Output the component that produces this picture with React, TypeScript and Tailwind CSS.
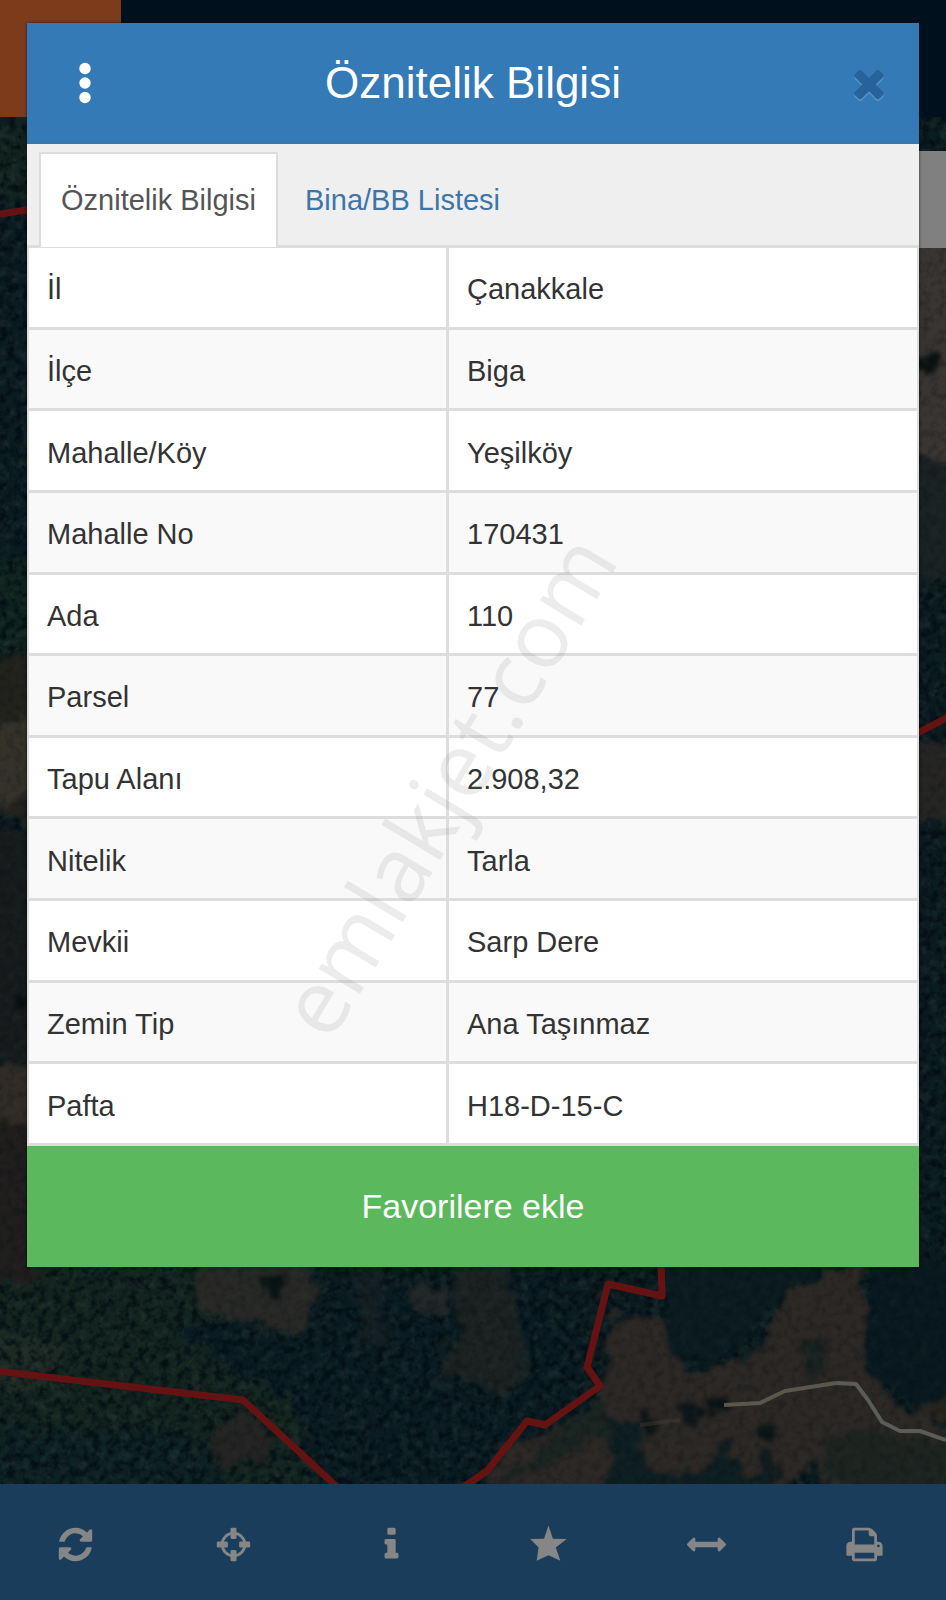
import type { ReactNode } from 'react';

const rows = [
  { label: 'İl', value: 'Çanakkale' },
  { label: 'İlçe', value: 'Biga' },
  { label: 'Mahalle/Köy', value: 'Yeşilköy' },
  { label: 'Mahalle No', value: '170431' },
  { label: 'Ada', value: '110' },
  { label: 'Parsel', value: '77' },
  { label: 'Tapu Alanı', value: '2.908,32' },
  { label: 'Nitelik', value: 'Tarla' },
  { label: 'Mevkii', value: 'Sarp Dere' },
  { label: 'Zemin Tip', value: 'Ana Taşınmaz' },
  { label: 'Pafta', value: 'H18-D-15-C' },
];

const Icon = ({ children, className = 'size-[39px]' }: { children: ReactNode; className?: string }) => (
  <svg viewBox="0 0 1792 1792" fill="currentColor" className={className} aria-hidden="true">
    {children}
  </svg>
);

const tools = [
  {
    name: 'Yenile',
    icon: (
      <path d="M1639 1056q0 5-1 7-64 268-268 434.5t-478 166.5q-146 0-282.5-55t-243.5-157l-129 129q-19 19-45 19t-45-19-19-45v-448q0-26 19-45t45-19h448q26 0 45 19t19 45-19 45l-137 137q71 66 161 102t187 36q134 0 250-65t186-179q11-17 53-117 8-23 30-23h192q13 0 22.5 9.5t9.5 22.5zm25-800v448q0 26-19 45t-45 19h-448q-26 0-45-19t-19-45 19-45l138-138q-148-137-349-137-134 0-250 65t-186 179q-11 17-53 117-8 23-30 23h-199q-13 0-22.5-9.5t-9.5-22.5v-7q65-268 270-434.5t480-166.5q146 0 284 55.5t245 156.5l130-129q19-19 45-19t45 19 19 45z" />
    ),
  },
  {
    name: 'Konum',
    icon: (
      <>
        <circle cx="896" cy="896" r="520" fill="none" stroke="currentColor" strokeWidth="130" />
        <rect x="758" y="128" width="276" height="510" rx="60" />
        <rect x="758" y="1154" width="276" height="510" rx="60" />
        <rect x="128" y="758" width="510" height="276" rx="60" />
        <rect x="1154" y="758" width="510" height="276" rx="60" />
      </>
    ),
  },
  {
    name: 'Bilgi',
    icon: (
      <path d="M1216 1344v128q0 26-19 45t-45 19h-512q-26 0-45-19t-19-45v-128q0-26 19-45t45-19h64v-384h-64q-26 0-45-19t-19-45v-128q0-26 19-45t45-19h384q26 0 45 19t19 45v576h64q26 0 45 19t19 45zm-128-1152v192q0 26-19 45t-45 19h-256q-26 0-45-19t-19-45v-192q0-26 19-45t45-19h256q26 0 45 19t19 45z" />
    ),
  },
  {
    name: 'Favoriler',
    icon: (
      <path d="M896 25 L1100 630 L1735 645 L1230 1030 L1440 1640 L896 1395 L352 1640 L440 1030 L55 645 L692 630Z" />
    ),
  },
  {
    name: 'Ölçüm',
    icon: (
      <path d="M1792 896q0 26-19 45l-256 256q-19 19-45 19t-45-19-19-45v-128h-1024v128q0 26-19 45t-45 19-45-19l-256-256q-19-19-19-45t19-45l256-256q19-19 45-19t45 19 19 45v128h1024v-128q0-26 19-45t45-19 45 19l256 256q19 19 19 45z" />
    ),
  },
  {
    name: 'Yazdır',
    icon: (
      <path d="M448 1536h896v-256h-896v256zm0-640h896v-384h-160q-40 0-68-28t-28-68v-160h-640v640zm1152 64q0-26-19-45t-45-19-45 19-19 45 19 45 45 19 45-19 19-45zm128 0v416q0 13-9.5 22.5t-22.5 9.5h-224v160q0 40-28 68t-68 28h-960q-40 0-68-28t-28-68v-160h-224q-13 0-22.5-9.5t-9.5-22.5v-416q0-79 56.5-135.5t135.5-56.5h64v-544q0-40 28-68t68-28h672q40 0 88 20t76 48l152 152q28 28 48 76t20 88v256h64q79 0 135.5 56.5t56.5 135.5z" />
    ),
  },
];

// Satellite map behind the dialog, already darkened by the backdrop
const MapBackground = () => (
  <svg
    viewBox="0 0 946 1600"
    preserveAspectRatio="xMidYMid slice"
    className="absolute inset-0 h-full w-full"
    aria-hidden="true"
  >
    <defs>
      <filter id="rough" x="-10%" y="-10%" width="120%" height="120%" colorInterpolationFilters="sRGB">
        <feTurbulence type="fractalNoise" baseFrequency="0.06" numOctaves="3" seed="4" result="n" />
        <feDisplacementMap in="SourceGraphic" in2="n" scale="26" xChannelSelector="R" yChannelSelector="G" />
        <feGaussianBlur stdDeviation="2" />
      </filter>
      <filter id="shade" x="0" y="0" width="100%" height="100%" colorInterpolationFilters="sRGB">
        <feTurbulence type="fractalNoise" baseFrequency="0.13" numOctaves="4" seed="9" />
        <feColorMatrix values="0 0 0 0 0  0 0 0 0 0.03  0 0 0 0 0.06  3 0 0 0 -1.3" />
      </filter>
      <filter id="light" x="0" y="0" width="100%" height="100%" colorInterpolationFilters="sRGB">
        <feTurbulence type="fractalNoise" baseFrequency="0.1" numOctaves="4" seed="21" />
        <feColorMatrix values="0 0 0 0 0.2  0 0 0 0 0.26  0 0 0 0 0.24  0 2.4 0 0 -1.1" />
      </filter>
    </defs>

    <rect width="946" height="1600" fill="#0b1c20" />

    {/* woodland */}
    <g filter="url(#rough)">
      <path d="M-20 117H60V200H-20Z" fill="#12231f" />
      <path d="M-20 560H60V660H-20Z" fill="#0f231e" />
      <path d="M-20 1260H190L260 1330L330 1340L300 1420L330 1500H-20Z" fill="#13241f" />
      <path d="M170 1330L340 1300L560 1270L600 1400L480 1500H330L290 1400Z" fill="#0a1c22" />
      <path d="M0 1430H190L240 1500H0Z" fill="#0d2022" />
      <path d="M-20 1330L60 1345L55 1390L-20 1395Z" fill="#1d2a24" />
    </g>

    <rect y="117" width="946" height="1367" filter="url(#shade)" opacity="0.6" />
    <rect y="117" width="946" height="1367" filter="url(#light)" opacity="0.3" />

    {/* fields and bare ground */}
    <g filter="url(#rough)">
      <path d="M-40 670L50 650V830L-40 800Z" fill="#22221d" />
      <path d="M-40 750L50 700V780L-40 830Z" fill="#35322a" />
      <path d="M-40 830H50V1060H-40Z" fill="#181b1c" />
      <path d="M-40 1065H50V1125H-40Z" fill="#312c27" />
      <path d="M-40 1125H50V1280H-40Z" fill="#201e1d" />
      <path d="M895 240H980V470L895 450Z" fill="#393532" />
      <path d="M895 460H980V580H895Z" fill="#1b2223" />
      <path d="M895 740H980V825L895 815Z" fill="#262523" />
      <path d="M200 1258H315L316 1310L298 1335L260 1325L192 1306Z" fill="#282926" />
      <path d="M210 1435L245 1410L272 1440L264 1462L214 1468Z" fill="#242423" />
      <path d="M350 1265L365 1345L385 1340L380 1262Z" fill="#172122" opacity="0.7" />
      <path d="M410 1285L450 1290L445 1315L415 1305Z" fill="#232828" />
      <path d="M455 1262H510L530 1380L500 1395L440 1370L455 1340Z" fill="#1f2422" opacity="0.8" />
      <path d="M608 1315L665 1320L690 1375L760 1350L790 1290L850 1265H865L868 1370L890 1400L980 1440V1500H830L815 1460L770 1500H480L500 1450L600 1410Z" fill="#2c2825" />
      <path d="M905 1380L980 1370V1415L920 1415Z" fill="#29251f" />
    </g>

    {/* shades inside the fields */}
    <g filter="url(#rough)">
      <path d="M490 1490L560 1435L600 1395L612 1430L540 1470Z" fill="#1a2421" />
      <path d="M610 1420L634 1420L645 1470L700 1480L722 1440L745 1470L775 1490H610Z" fill="#0e1e21" />
      <path d="M660 1262H840L790 1290L745 1340L700 1366L675 1360Z" fill="#0c1b20" />
      <path d="M805 1345L830 1338L825 1380L805 1378Z" fill="#1a2221" />
      <path d="M825 1440L860 1430L980 1450V1490H860L830 1480Z" fill="#1d2420" />
      <path d="M765 1445L780 1470L770 1490L760 1480Z" fill="#121c1e" />
      <path d="M870 1262H980V1370L920 1410L868 1370Z" fill="#09191f" />
      <circle cx="694" cy="1416" r="11" fill="#0e1618" />
      <circle cx="718" cy="1406" r="10" fill="#0c1214" />
      <circle cx="648" cy="1426" r="9" fill="#0e1517" />
      <circle cx="768" cy="1430" r="8" fill="#0e1517" />
      <circle cx="275" cy="1287" r="10" fill="#0a1314" />
      <ellipse cx="928" cy="363" rx="13" ry="9" fill="#0c1211" />
      <ellipse cx="22" cy="1001" rx="9" ry="5" fill="#0a1011" />
    </g>

    <rect y="117" width="946" height="1367" filter="url(#shade)" opacity="0.2" />
    <rect y="117" width="946" height="1367" filter="url(#light)" opacity="0.12" />

    {/* dirt road */}
    <path d="M640 1425L680 1420" stroke="#49423a" strokeWidth="4" fill="none" opacity="0.4" />
    <path d="M724 1405L760 1403L785 1391L836 1383" stroke="#5c574b" strokeWidth="4" fill="none" strokeLinejoin="round" />
    <path d="M836 1383L856 1384L868 1400L882 1422L900 1431L920 1431L946 1440" stroke="#5a5c58" strokeWidth="4" fill="none" strokeLinejoin="round" />

    {/* parcel boundaries */}
    <g fill="none" stroke="#651213" strokeWidth="7" strokeLinejoin="round">
      <path d="M0 214L40 208" />
      <path d="M910 737L950 716" />
      <path d="M-5 1371L243 1400L336 1486" />
      <path d="M661 1262L662 1296L608 1284L587 1367L600 1386L545 1425L527 1421L487 1471L462 1488" />
    </g>

    {/* controls under the backdrop */}
    <rect width="946" height="117" fill="#00111e" />
    <rect width="121" height="117" fill="#7e3b1c" />
    <rect x="890" y="151" width="56" height="97" fill="#808080" />
  </svg>
);

const Dialog = () => (
  <section
    role="dialog"
    aria-label="Öznitelik Bilgisi"
    className="relative mx-[27px] mt-[23px] bg-white shadow-[0_0_3px_rgba(0,0,0,0.6)]"
  >
    <header className="flex h-[121px] items-center justify-between border-b-2 border-[#3a77ab] bg-[#337ab7] px-7 text-white">
      <button type="button" aria-label="Menü" className="flex size-[60px] items-center justify-center">
        <svg viewBox="0 0 12 42" fill="currentColor" className="h-[42px] w-3" aria-hidden="true">
          <circle cx="6" cy="6.5" r="5.7" />
          <circle cx="6" cy="21" r="5.7" />
          <circle cx="6" cy="35.5" r="5.7" />
        </svg>
      </button>
      <h1 className="text-[44px] leading-none">Öznitelik Bilgisi</h1>
      <button type="button" aria-label="Kapat" className="flex size-[60px] items-center justify-end text-[#28629a]">
        <Icon className="size-11 drop-shadow-[0_2px_0_#5592c6]">
          <path d="M1490 1322q0 40-28 68l-136 136q-28 28-68 28t-68-28l-294-294-294 294q-28 28-68 28t-68-28l-136-136q-28-28-28-68t28-68l294-294-294-294q-28-28-28-68t28-68l136-136q28-28 68-28t68 28l294 294 294-294q28-28 68-28t68 28l136 136q28 28 28 68t-28 68l-294 294 294 294q28 28 28 68z" />
        </Icon>
      </button>
    </header>

    <div role="tablist" className="flex h-[104px] gap-[5px] border-b-3 border-[#ddd] bg-[#efefef] pt-2 pl-3 text-[29px]">
      <button
        type="button"
        role="tab"
        aria-selected="true"
        className="-mb-[2px] border-2 border-b-0 border-[#ddd] bg-white px-5 text-[#555]"
      >
        Öznitelik Bilgisi
      </button>
      <button
        type="button"
        role="tab"
        aria-selected="false"
        className="-mb-[2px] border-2 border-b-0 border-transparent px-5 text-[#3c76a8]"
      >
        Bina/BB Listesi
      </button>
    </div>

    <table className="h-[898px] w-full table-fixed border-separate border-spacing-0 border-x-2 border-[#ddd] text-[29px] leading-9 text-[#333]">
      <colgroup>
        <col className="w-[47.3%]" />
        <col />
      </colgroup>
      <tbody>
        {rows.map((row) => (
          <tr key={row.label} className="odd:bg-white even:bg-[#f9f9f9]">
            <th scope="row" className="border-r-3 border-b-3 border-[#ddd] pt-1 pl-[18px] text-left font-normal">
              {row.label}
            </th>
            <td className="border-b-3 border-[#ddd] pt-1 pl-[18px]">{row.value}</td>
          </tr>
        ))}
      </tbody>
    </table>

    <button type="button" className="block h-[121px] w-full bg-[#5cb85c] text-[34px] text-white">
      Favorilere ekle
    </button>
  </section>
);

export default function App() {
  return (
    <div className="relative flex min-h-screen flex-col overflow-hidden bg-[#0c1c20] font-['Liberation_Sans',Arial,sans-serif]">
      <MapBackground />
      <Dialog />

      <nav className="relative mt-auto grid h-[116px] grid-cols-6 bg-[#1a3d5b] pt-1 text-[#868686]">
        {tools.map((tool) => (
          <button key={tool.name} type="button" aria-label={tool.name} className="flex items-center justify-center pr-[6px]">
            <Icon>{tool.icon}</Icon>
          </button>
        ))}
      </nav>

      <span className="pointer-events-none absolute top-[49%] left-[47%] -translate-x-1/2 -translate-y-1/2 -rotate-59 font-['Open_Sans',sans-serif] text-[90px] leading-none text-[#808080]/15">
        emlakjet.com
      </span>
    </div>
  );
}
